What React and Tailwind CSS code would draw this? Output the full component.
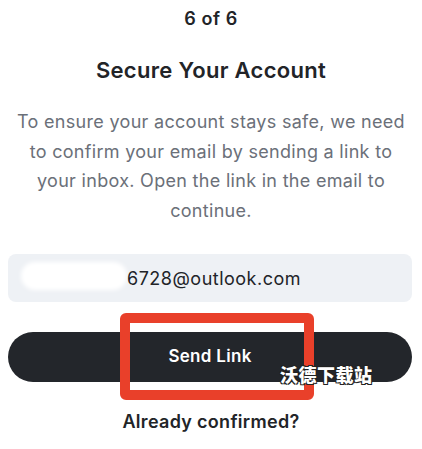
import React from 'react'

const font = { fontFamily: 'Inter, "Noto Sans", sans-serif' }

export default function App() {
  return (
    <div className="relative w-[422px] h-[449px] bg-white overflow-hidden" style={font}>
      <div className="flex flex-col items-center">
        {/* step counter */}
        <div className="mt-[5px] h-[28px] leading-[28px] text-[18px] font-semibold tracking-[0.6px] text-[#222428]">6 of 6</div>

        {/* heading */}
        <h1 className="mt-[22px] h-[30px] leading-[30px] text-[22px] font-semibold tracking-[0.3px] text-[#222428]">Secure Your Account</h1>

        {/* description */}
        <p className="mt-[22px] w-[410px] text-center text-[18px] leading-[29.5px] tracking-[0.3px] text-[#6b7079]">
          To ensure your account stays safe, we need
          <br />
          to confirm your email by sending a link to
          <br />
          your inbox. Open the link in the email to
          <br />
          continue.
        </p>

        {/* email field */}
        <div className="mt-[29px] w-[404px] h-[48px] self-start ml-2 rounded-lg bg-[#eef1f5] flex items-center relative">
          <div className="absolute left-[13px] top-[8px] w-[106px] h-[28px] rounded-full bg-white blur-[2px]" />
          <span className="ml-[119px] text-[18px] tracking-[0.5px] text-[#222428] relative">6728@outlook.com</span>
        </div>

        {/* send link */}
        <button className="mt-[30px] w-[404px] h-[50px] self-start ml-2 rounded-full bg-[#23262b] text-white text-[17px] font-semibold tracking-[0.3px]">
          Send Link
        </button>

        <button className="mt-[28px] text-[18px] font-semibold text-[#222428] leading-[24px] tracking-[0.3px]">Already confirmed?</button>
      </div>

      {/* annotation overlay */}
      <div className="absolute left-[120px] top-[313px] w-[194px] h-[87px] rounded-[6px] border-[10px] border-[#e9402a]" />
      <div
        className="absolute left-[280px] top-[363px] text-[18px] font-black text-white leading-[22px] tracking-[0.5px]"
        style={{
          fontFamily: '"Noto Sans CJK SC", sans-serif',
          textShadow: '1px 1px 0 #222, -1px -1px 0 #222, 1px -1px 0 #222, -1px 1px 0 #222',
        }}
      >
        沃德下载站
      </div>
    </div>
  )
}
